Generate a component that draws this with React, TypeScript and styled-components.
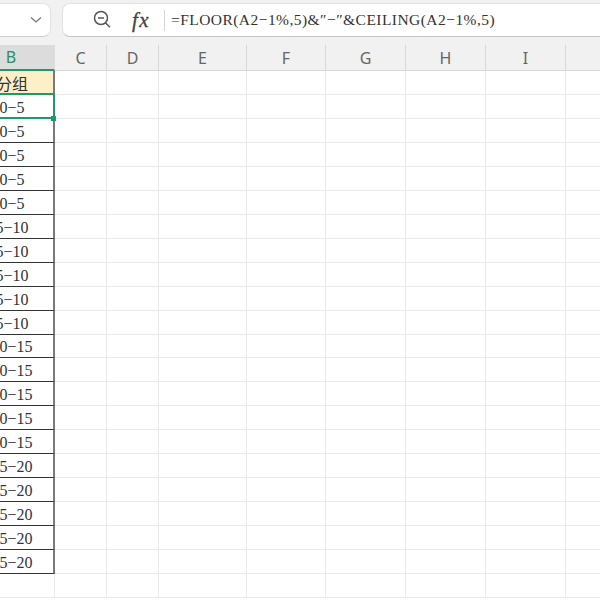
import styled, { createGlobalStyle } from "styled-components"

const Global = createGlobalStyle`
  html, body { margin: 0; padding: 0; background: #fff; }
  body { width: 600px; height: 600px; overflow: hidden; }
`

const columns = [
  { label: "B", width: 84 },
  { label: "C", width: 52 },
  { label: "D", width: 52 },
  { label: "E", width: 88 },
  { label: "F", width: 79 },
  { label: "G", width: 80 },
  { label: "H", width: 80 },
  { label: "I", width: 80 },
  { label: "", width: 80 },
]

const groups = ["0−5", "5−10", "10−15", "15−20"]
const dataRows = groups.flatMap(g => Array<string>(5).fill(g))

const Page = styled.div`
  width: 600px;
  height: 600px;
  overflow: hidden;
  background: #fff;
`

const FormulaBar = styled.div`
  height: 45px;
  box-sizing: border-box;
  padding-top: 3px;
  background: #f1f1f1;
  display: flex;
  gap: 11px;
  overflow: hidden;
`

const NameBox = styled.div`
  width: 52px;
  height: 34px;
  margin-left: -1px;
  box-sizing: border-box;
  background: #fff;
  border: 1px solid #e2e2e2;
  border-bottom-color: #cfcfcf;
  border-left: 0;
  border-radius: 0 8px 8px 0;
  display: flex;
  align-items: center;
  justify-content: flex-end;
  padding-right: 7px;
  color: #777;
`

const FormulaBox = styled.div`
  flex: 1;
  height: 34px;
  margin-right: -12px;
  box-sizing: border-box;
  background: #fff;
  border: 1px solid #e2e2e2;
  border-bottom-color: #c4c4c4;
  border-radius: 8px;
  display: flex;
  align-items: center;
  padding-left: 29px;
`

const ToolIcon = styled.svg`
  flex-shrink: 0;
  display: block;
`

const FxMark = styled.span`
  font-family: "Liberation Serif", serif;
  font-style: italic;
  font-size: 21px;
  line-height: 22px;
  color: #444;
  margin-left: 20px;
  width: 24px;
  letter-spacing: 1.5px;
  -webkit-text-stroke: 0.3px #444;
`

const Divider = styled.div`
  width: 1px;
  height: 21px;
  background: #d4d4d4;
  margin: 0 6px 0 8px;
`

const FormulaText = styled.div`
  font-family: "Liberation Serif", "Noto Sans CJK SC", serif;
  font-size: 15.5px;
  letter-spacing: 0.45px;
  color: #333;
  white-space: nowrap;
`

const Sheet = styled.div`
  margin-left: -29px;
`

const HeaderRow = styled.div`
  display: flex;
  height: 26px;
  background: #f1f1f1;
`

const HeaderCell = styled.div<{ $width: number; $active?: boolean }>`
  width: ${p => p.$width}px;
  box-sizing: border-box;
  flex-shrink: 0;
  display: flex;
  align-items: center;
  justify-content: center;
  padding-right: ${p => (p.$active ? 3 : 0)}px;
  font-family: "Noto Sans", "Liberation Sans", sans-serif;
  font-size: 16px;
  color: ${p => (p.$active ? "#2a8f66" : "#666")};
  background: ${p => (p.$active ? "#dcdcdc" : "transparent")};
  border-right: 1px solid ${p => (p.$active ? "#dcdcdc" : "#d8d8d8")};
  border-bottom: ${p => (p.$active ? "2px solid #1c9a6b" : "1px solid #d8d8d8")};
`

const Row = styled.div<{ $short?: boolean }>`
  display: flex;
  height: ${p => (p.$short ? 23 : 24)}px;
`

const Cell = styled.div<{ $width: number }>`
  width: ${p => p.$width}px;
  box-sizing: border-box;
  flex-shrink: 0;
  border-right: 1px solid #e9e9e9;
  border-bottom: 1px solid #e9e9e9;
`

const DataCell = styled.div<{ $width: number; $title?: boolean }>`
  width: ${p => p.$width}px;
  position: relative;
  box-sizing: border-box;
  flex-shrink: 0;
  display: flex;
  align-items: center;
  justify-content: center;
  padding-top: ${p => (p.$title ? 0 : 2)}px;
  font-family: "Liberation Serif", "Noto Sans CJK SC", serif;
  font-size: 16px;
  color: #333;
  white-space: nowrap;
  background: ${p => (p.$title ? "#fdf0c8" : "#fff")};
  border-right: 2px solid #7a7a7a;
  border-bottom: 1px solid #333;
`

const Selection = styled.div`
  position: absolute;
  z-index: 1;
  inset: -2px -2px -1px -2px;
  border: 2px solid #1c9a6b;
  pointer-events: none;

  &::after {
    content: "";
    position: absolute;
    right: -3px;
    bottom: -4px;
    width: 5px;
    height: 5px;
    background: #1c9a6b;
  }
`

export default function App() {
  return (
    <Page>
      <Global />
      <FormulaBar>
        <NameBox>
          <svg width="14" height="14" viewBox="0 0 14 14" fill="none" stroke="currentColor" strokeWidth="1.3">
            <path d="M2 4.5l5 4.5 5-4.5" />
          </svg>
        </NameBox>
        <FormulaBox>
          <ToolIcon width="20" height="20" viewBox="0 0 20 20" fill="none" stroke="#555" strokeWidth="1.5">
            <circle cx="9" cy="8" r="6.5" />
            <path d="M6 8h6M13.6 13l4.4 4.2" />
          </ToolIcon>
          <FxMark>fx</FxMark>
          <Divider />
          <FormulaText>=FLOOR(A2−1%,5)&amp;″−″&amp;CEILING(A2−1%,5)</FormulaText>
        </FormulaBox>
      </FormulaBar>
      <Sheet>
        <HeaderRow>
          {columns.map((c, i) => (
            <HeaderCell key={i} $active={i === 0} $width={c.width}>
              {c.label}
            </HeaderCell>
          ))}
        </HeaderRow>
        <Row>
          <DataCell $title $width={columns[0].width}>
            分组
          </DataCell>
          {columns.slice(1).map((c, i) => (
            <Cell key={i} $width={c.width} />
          ))}
        </Row>
        {dataRows.map((value, r) => (
          <Row key={r} $short={r === 10}>
            <DataCell $width={columns[0].width}>
              {value}
              {r === 0 && <Selection />}
            </DataCell>
            {columns.slice(1).map((c, i) => (
              <Cell key={i} $width={c.width} />
            ))}
          </Row>
        ))}
        <Row>
          {columns.map((c, i) => (
            <Cell key={i} $width={c.width} />
          ))}
        </Row>
      </Sheet>
    </Page>
  )
}
